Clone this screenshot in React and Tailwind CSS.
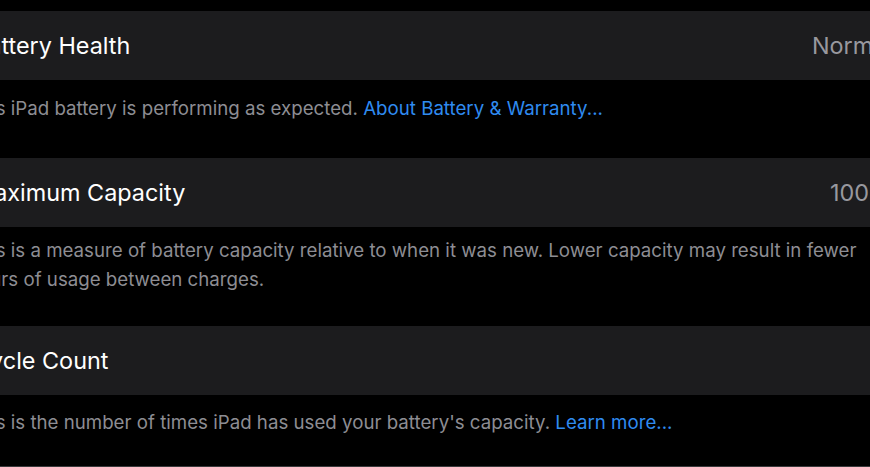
const sections = [
  {
    title: "Battery Health",
    value: "Normal",
    footer: "This iPad battery is performing as expected.",
    link: "About Battery & Warranty...",
    footerClass: "h-[78px] pt-[14px]",
  },
  {
    title: "Maximum Capacity",
    value: "100%",
    footer:
      "This is a measure of battery capacity relative to when it was new. Lower capacity may result in fewer hours of usage between charges.",
    footerClass: "h-[99px] pt-[9px]",
  },
  {
    title: "Cycle Count",
    value: "",
    footer: "This is the number of times iPad has used your battery's capacity.",
    link: "Learn more...",
    footerClass: "h-[71px] pt-[13px]",
  },
];

const Row = ({ title, value }) => (
  <div className="h-[69px] bg-[#1c1c1e] flex items-center justify-between text-[23.4px]">
    <span className="text-white">{title}</span>
    <span className="text-[#98989e]">{value}</span>
  </div>
);

const Footer = ({ text, link, className }) => (
  <div className={`${className} ml-[-5px] text-[18.7px] leading-[29px] text-[#8d8d93] pr-[20px]`}>
    {text} {link && <span className="text-[#2f8bf0]">{link}</span>}
  </div>
);

export default function App() {
  return (
    <div
      className="w-[870px] h-[467px] overflow-hidden bg-black"
      style={{ fontFamily: "Inter, 'Noto Sans', sans-serif" }}
    >
      <div className="ml-[-27px] mr-[-22px] pt-[11px]">
        {sections.map((s) => (
          <div key={s.title}>
            <Row title={s.title} value={s.value} />
            <Footer text={s.footer} link={s.link} className={s.footerClass} />
          </div>
        ))}
        <div className="h-[40px] bg-[#3a3a3c]" />
      </div>
    </div>
  );
}
